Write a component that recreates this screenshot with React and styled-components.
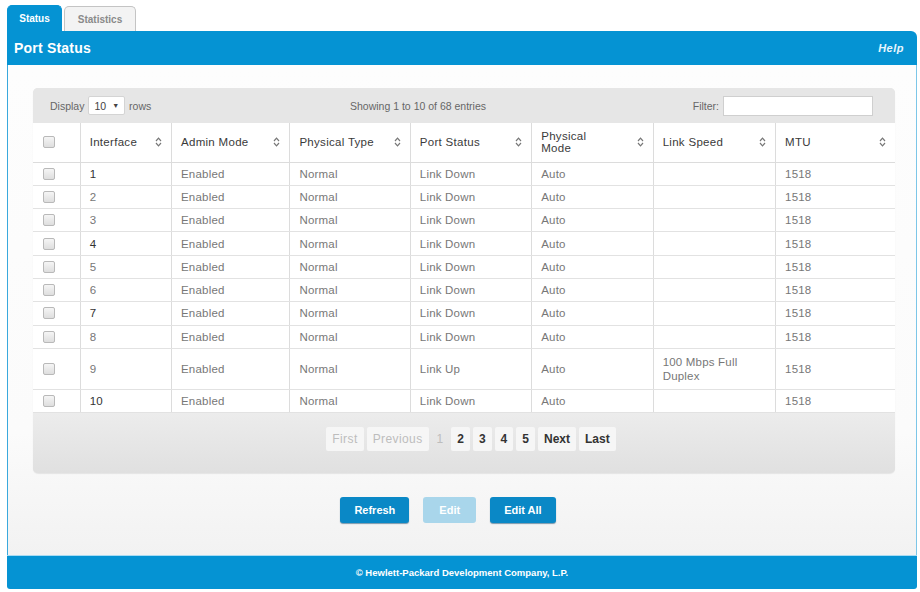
import styled, { createGlobalStyle } from "styled-components";

const GlobalStyle = createGlobalStyle`
  body {
    margin: 0;
    background: #ffffff;
    font-family: "Liberation Sans", Arial, sans-serif;
  }
`;

const columns = [
  { label: "Interface", width: 91 },
  { label: "Admin Mode", width: 118 },
  { label: "Physical Type", width: 120 },
  { label: "Port Status", width: 121 },
  { label: "Physical\nMode", width: 121 },
  { label: "Link Speed", width: 122 },
  { label: "MTU", width: 119 },
];

const rows = Array.from({ length: 10 }, (_, i) => ({
  id: i + 1,
  admin: "Enabled",
  type: "Normal",
  status: i === 8 ? "Link Up" : "Link Down",
  mode: "Auto",
  speed: i === 8 ? "100 Mbps Full Duplex" : "",
  mtu: "1518",
}));

const SortIcon = () => (
  <svg width="7" height="10" viewBox="0 0 7 10">
    <path d="M1 4 L3.5 1.2 L6 4" fill="none" stroke="#777" strokeWidth="1.2" />
    <path d="M1 6 L3.5 8.8 L6 6" fill="none" stroke="#777" strokeWidth="1.2" />
  </svg>
);

const App = () => {
  return (
    <>
      <GlobalStyle />
      <Page>
        <Tabs>
          <Tab active>Status</Tab>
          <Tab>Statistics</Tab>
        </Tabs>
        <TitleBar>
          <Title>Port Status</Title>
          <Help>Help</Help>
        </TitleBar>
        <Content>
          <Panel>
            <TopBar>
              <Display>
                Display
                <Select>
                  10 <Caret>▼</Caret>
                </Select>
                rows
              </Display>
              <Showing>Showing 1 to 10 of 68 entries</Showing>
              <Filter>
                Filter:
                <FilterInput />
              </Filter>
            </TopBar>
            <Table>
              <colgroup>
                <col style={{ width: 47 }} />
                {columns.map((c) => (
                  <col key={c.label} style={{ width: c.width }} />
                ))}
              </colgroup>
              <thead>
                <tr>
                  <Th>
                    <Check />
                  </Th>
                  {columns.map((c) => (
                    <Th key={c.label}>
                      <HeadInner>
                        <HeadLabel>{c.label}</HeadLabel>
                        <SortIcon />
                      </HeadInner>
                    </Th>
                  ))}
                </tr>
              </thead>
              <tbody>
                {rows.map((r) => (
                  <Row key={r.id} tall={!!r.speed}>
                    <Td>
                      <Check />
                    </Td>
                    <Td dark={r.id % 3 === 1}>{r.id}</Td>
                    <Td>{r.admin}</Td>
                    <Td>{r.type}</Td>
                    <Td>{r.status}</Td>
                    <Td>{r.mode}</Td>
                    <Td>
                      <Speed>{r.speed}</Speed>
                    </Td>
                    <Td>{r.mtu}</Td>
                  </Row>
                ))}
              </tbody>
            </Table>
            <PagerBar>
              <Pager>
                <PageBtn disabled>First</PageBtn>
                <PageBtn disabled>Previous</PageBtn>
                <PageBtn current>1</PageBtn>
                <PageBtn>2</PageBtn>
                <PageBtn>3</PageBtn>
                <PageBtn>4</PageBtn>
                <PageBtn>5</PageBtn>
                <PageBtn>Next</PageBtn>
                <PageBtn>Last</PageBtn>
              </Pager>
            </PagerBar>
          </Panel>
          <Actions>
            <Button>Refresh</Button>
            <Button disabled>Edit</Button>
            <Button>Edit All</Button>
          </Actions>
        </Content>
        <Footer>© Hewlett-Packard Development Company, L.P.</Footer>
      </Page>
    </>
  );
};

const Page = styled.div`
  margin: 0 3px 0 7px;
  padding-top: 5px;
`;

const Tabs = styled.div`
  display: flex;
  gap: 2px;
  align-items: flex-end;
  height: 26px;
`;

const Tab = styled.div`
  box-sizing: border-box;
  height: ${({ active }) => (active ? "26px" : "25px")};
  display: flex;
  align-items: center;
  justify-content: center;
  border-radius: 5px 5px 0 0;
  font-size: 10px;
  font-weight: bold;
  background: ${({ active }) => (active ? "#0593d3" : "#f3f3f3")};
  color: ${({ active }) => (active ? "#ffffff" : "#8a8a8a")};
  border: 1px solid ${({ active }) => (active ? "#0593d3" : "#c4c4c4")};
  border-bottom: none;
  width: ${({ active }) => (active ? "55px" : "72px")};
`;

const TitleBar = styled.div`
  height: 34px;
  background: #0593d3;
  border-radius: 0 6px 0 0;
  display: flex;
  align-items: center;
  justify-content: space-between;
  padding: 0 13px 0 7px;
`;

const Title = styled.div`
  color: #ffffff;
  font-weight: bold;
  font-size: 14px;
  letter-spacing: 0.2px;
`;

const Help = styled.div`
  color: #e8f6fd;
  font-weight: bold;
  font-style: italic;
  font-size: 11px;
  letter-spacing: 0.5px;
`;

const Content = styled.div`
  border-left: 1px solid #3aa9dd;
  border-right: 1px solid #7cc6e8;
  background: linear-gradient(#fdfdfd 0%, #fbfbfb 75%, #f2f2f2 100%);
  padding: 23px 21px 0 25px;
  height: 490px;
  box-sizing: border-box;
`;

const Panel = styled.div`
  background: #e3e3e3;
  border-radius: 5px;
  overflow: hidden;
  box-shadow: 0 1px 1px rgba(0, 0, 0, 0.08);
`;

const TopBar = styled.div`
  height: 35px;
  display: flex;
  align-items: center;
  padding: 0 22px 0 17px;
  font-size: 10.5px;
  color: #666;
  background: #e6e6e6;
`;

const Display = styled.div`
  display: flex;
  align-items: center;
  gap: 4px;
  width: 300px;
`;

const Select = styled.div`
  background: #fff;
  border: 1px solid #d4d4d4;
  border-radius: 2px;
  height: 17px;
  padding: 0 5px;
  display: flex;
  align-items: center;
  gap: 6px;
  color: #444;
`;

const Caret = styled.span`
  font-size: 7px;
`;

const Showing = styled.div`
  flex: 1;
  text-align: left;
`;

const Filter = styled.div`
  display: flex;
  align-items: center;
  gap: 4px;
`;

const FilterInput = styled.div`
  width: 150px;
  height: 20px;
  background: #fff;
  border: 1px solid #cfcfcf;
  box-sizing: border-box;
`;

const Table = styled.table`
  width: 100%;
  border-collapse: collapse;
  table-layout: fixed;
  background: #fff;
  font-size: 11.5px;
`;

const Th = styled.th`
  height: 39px;
  box-sizing: border-box;
  border-right: 1px solid #dcdcdc;
  border-bottom: 1px solid #dcdcdc;
  text-align: left;
  padding: 0 9px;
  font-weight: normal;
  color: #333;
  &:last-child {
    border-right: none;
  }
`;

const HeadInner = styled.div`
  display: flex;
  align-items: center;
  justify-content: space-between;
`;

const HeadLabel = styled.span`
  white-space: pre-line;
  line-height: 12px;
  letter-spacing: 0.3px;
  color: #3a3a3a;
`;

const Row = styled.tr`
  height: ${({ tall }) => (tall ? "41px" : "23.3px")};
`;

const Td = styled.td`
  box-sizing: border-box;
  border-right: 1px solid #dcdcdc;
  border-bottom: 1px solid #e2e2e2;
  padding: 0 9px;
  color: ${({ dark }) => (dark ? "#333" : "#777")};
  letter-spacing: 0.2px;
  &:last-child {
    border-right: none;
  }
`;

const Speed = styled.div`
  width: 90px;
  line-height: 14px;
`;

const Check = styled.div`
  width: 10px;
  height: 10px;
  border: 1px solid #b9b9b9;
  border-radius: 2px;
  background: linear-gradient(#f5f5f5, #dedede);
  margin-left: 1px;
`;

const PagerBar = styled.div`
  height: 60px;
  display: flex;
  align-items: center;
  justify-content: center;
  background: linear-gradient(#ececec, #e0e0e0);
  padding-left: 14px;
`;

const Pager = styled.div`
  display: flex;
  gap: 3px;
  margin-top: -8px;
`;

const PageBtn = styled.div`
  height: 24px;
  padding: 0 ${({ current }) => (current ? "5px" : "6px")};
  display: flex;
  align-items: center;
  font-size: 12px;
  font-weight: ${({ disabled, current }) => (disabled || current ? "normal" : "bold")};
  color: ${({ disabled, current }) => (disabled || current ? "#bdbdbd" : "#333")};
  background: ${({ current }) => (current ? "transparent" : "#f6f6f6")};
  border-radius: 2px;
  letter-spacing: ${({ disabled }) => (disabled ? "0.4px" : "0")};
`;

const Actions = styled.div`
  display: flex;
  justify-content: center;
  gap: 14px;
  margin-top: 24px;
  padding-right: 32px;
`;

const Button = styled.div`
  height: 26px;
  padding: 0 ${({ disabled }) => (disabled ? "16px" : "14px")};
  display: flex;
  align-items: center;
  border-radius: 3px;
  font-size: 11px;
  font-weight: bold;
  color: #fff;
  background: ${({ disabled }) => (disabled ? "#a9d6eb" : "#0a88c6")};
  box-shadow: ${({ disabled }) => (disabled ? "none" : "0 1px 1px rgba(0,60,100,0.5)")};
`;

const Footer = styled.div`
  height: 33px;
  background: #0593d3;
  border-radius: 0 0 3px 3px;
  color: #fff;
  font-size: 9.5px;
  font-weight: bold;
  display: flex;
  align-items: center;
  justify-content: center;
  border-top: 1px solid #a8dbf2;
`;

export default App;
